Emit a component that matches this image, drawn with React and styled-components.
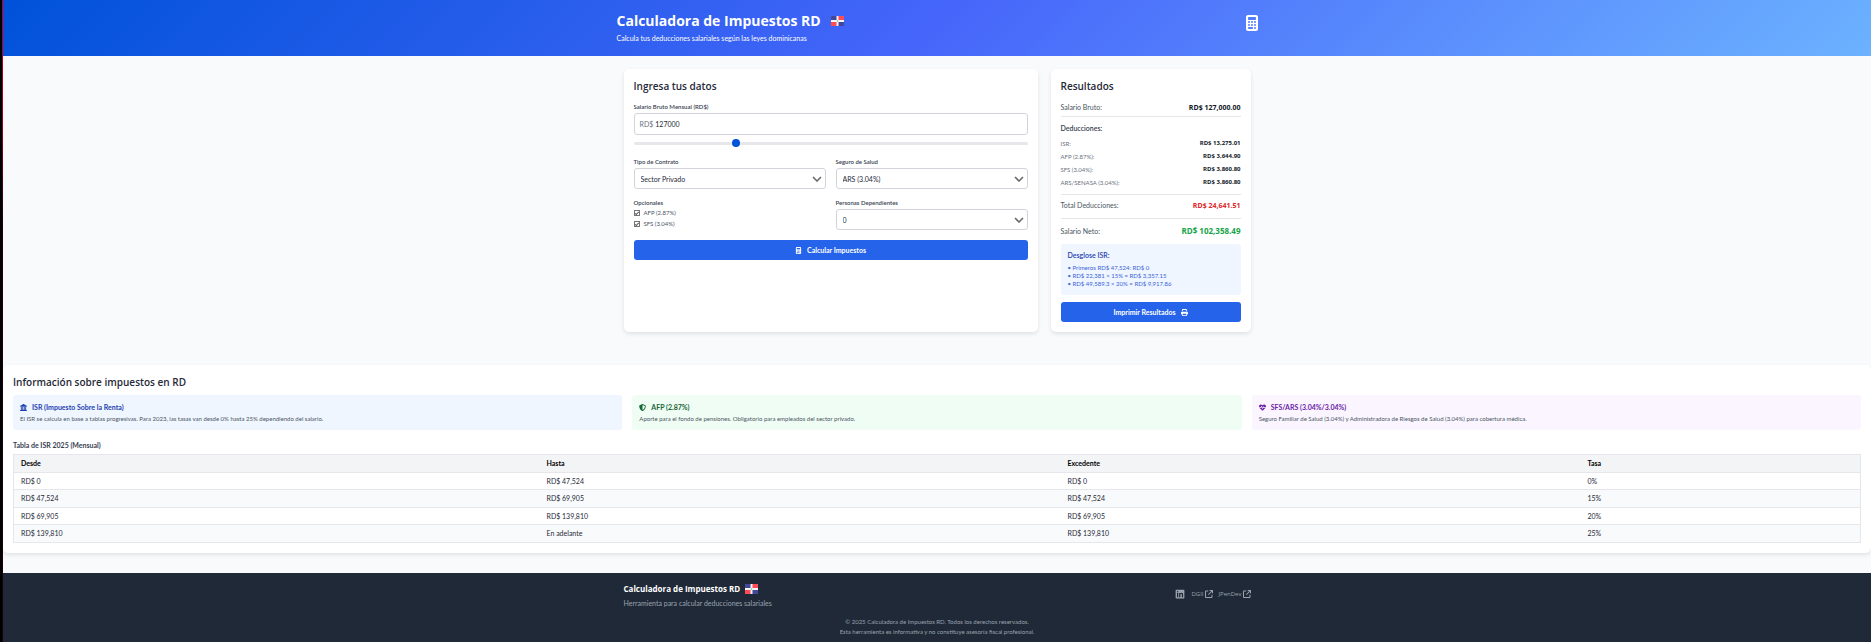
import React, { useState } from "react";
import styled, { createGlobalStyle, css } from "styled-components";
import {
  FaCalculator,
  FaLandmark,
  FaShieldHalved,
  FaHeartPulse,
  FaPrint,
  FaLinkedin,
  FaArrowUpRightFromSquare,
} from "react-icons/fa6";

const GlobalStyle = createGlobalStyle`
  *, *::before, *::after { box-sizing: border-box; }
  body { margin: 0; background: #f9fafb; color: #1f2937; font-family: Lato, "Open Sans", sans-serif; }
  h1, h2, h3, h4, p, ul { margin: 0; padding: 0; }
  button, input, select { font-family: inherit; }
`;

const display = css`
  font-family: "Open Sans", "Noto Sans", sans-serif;
`;

const Page = styled.div`
  display: grid;
  grid-template-columns: 3px minmax(0, 1fr);
  min-height: 100vh;
`;

const Edge = styled.div`
  background: linear-gradient(#c00024, #a0001c 18%, #1c0010 35%) right / 1px 100% no-repeat #000;
`;

const Content = styled.div`
  display: flex;
  flex-direction: column;
`;

const Header = styled.header`
  background: linear-gradient(135deg, #0052d9 0%, #4666fa 50%, #6cb2ff 100%);
  color: #fff;
  padding: 12px 0 14px;
`;

const HeaderInner = styled.div`
  display: flex;
  justify-content: space-between;
  align-items: flex-start;
  max-width: 641px;
  margin: 0 auto;
`;

const SiteTitle = styled.h1`
  ${display}
  display: flex;
  align-items: center;
  gap: 10px;
  font-size: 14px;
  line-height: 18px;
  font-weight: 700;
`;

const Tagline = styled.p`
  margin-top: 4px;
  font-size: 7px;
  line-height: 8px;
`;

const HeaderIcon = styled.span`
  display: flex;
  align-items: center;
  height: 22px;
  font-size: 16px;
  svg { width: 12px; height: 16px; }
`;

const Main = styled.main`
  width: 627px;
  max-width: 100%;
  margin: 13px auto 0;
  display: grid;
  grid-template-columns: minmax(0, 1fr) 200px;
  gap: 13px;
`;

const Card = styled.section`
  background: #fff;
  border-radius: 5px;
  padding: 10px;
  box-shadow: 0 2px 4px rgba(0, 0, 0, 0.1);
`;

const Heading = styled.h2`
  ${display}
  font-size: 10px;
  line-height: 14px;
  font-weight: 600;
`;

const Form = styled.form`
  display: flex;
  flex-direction: column;
  margin-top: 10px;
  gap: 10px;
`;

const Field = styled.div`
  display: flex;
  flex-direction: column;
`;

const labelText = css`
  margin-bottom: 2px;
  font-size: 6px;
  line-height: 8px;
  font-weight: 600;
  color: #374151;
`;
const Label = styled.label`${labelText}`;

const InputBox = styled.div`
  display: flex;
  align-items: center;
  gap: 2px;
  height: 22px;
  padding: 0 5px;
  border: 1px solid #d1d5db;
  border-radius: 3px;
  font-size: 7px;
  color: #6b7280;
`;

const MoneyInput = styled.input`
  flex: 1;
  min-width: 0;
  border: 0;
  padding: 0;
  outline: 0;
  font-size: 7px;
  color: #1f2937;
  background: none;
`;

const Slider = styled.input`
  appearance: none;
  width: 100%;
  height: 8px;
  margin: 4px 0 1px;
  background: transparent;
  &::-webkit-slider-runnable-track {
    height: 3px;
    border-radius: 2px;
    background: #e5e7eb;
  }
  &::-webkit-slider-thumb {
    appearance: none;
    width: 8px;
    height: 8px;
    margin-top: -3px;
    border-radius: 50%;
    background: #0052d9;
  }
`;

const Pair = styled.div`
  display: grid;
  grid-template-columns: 1fr 1fr;
  gap: 10px;
`;

const SelectBox = styled.div`
  display: grid;
  align-items: center;
  > * { grid-area: 1 / 1; }
  svg { justify-self: end; margin-right: 4px; pointer-events: none; }
`;

const Select = styled.select`
  appearance: none;
  width: 100%;
  height: 21px;
  padding: 0 16px 0 6px;
  border: 1px solid #d1d5db;
  border-radius: 3px;
  background: #fff;
  color: #1f2937;
  font-size: 7px;
`;

const Options = styled.fieldset`
  display: flex;
  flex-direction: column;
  margin: 0;
  padding: 0;
  border: 0;
`;
const Legend = styled.legend`
  ${labelText}
  margin-bottom: 0;
  padding: 0;
`;

const CheckLabel = styled.label`
  display: flex;
  align-items: center;
  gap: 4px;
  height: 11px;
  font-size: 6px;
  color: #4b5563;
`;

const Checkbox = styled.input`
  appearance: none;
  display: grid;
  place-items: center;
  width: 6px;
  height: 6px;
  margin: 0;
  border: 1px solid #767676;
  background: #fff;
  &:checked::after {
    content: "";
    width: 2px;
    height: 4px;
    border: solid #4b5563;
    border-width: 0 1px 1px 0;
    transform: rotate(45deg);
  }
`;

const PrimaryButton = styled.button`
  display: flex;
  align-items: center;
  justify-content: center;
  gap: 5px;
  width: 100%;
  height: 20px;
  padding: 0;
  border: 0;
  border-radius: 3px;
  background: #2563eb;
  color: #fff;
  font-size: 7px;
  font-weight: 700;
`;

const Results = styled.div`
  display: flex;
  flex-direction: column;
  margin-top: 10px;
`;

const Row = styled.div`
  display: flex;
  justify-content: space-between;
  align-items: center;
  font-size: 7px;
  line-height: 9px;
  color: #4b5563;
`;
const GrossRow = styled(Row)`
  padding-bottom: 4px;
  border-bottom: 1px solid #e5e7eb;
`;
const TotalRow = styled(Row)`
  margin-top: 7px;
  padding: 6px 0 8px;
  border: solid #e5e7eb;
  border-width: 1px 0;
`;
const NetRow = styled(Row)`
  margin-top: 6px;
  line-height: 12px;
`;
const DetailRow = styled(Row)`
  font-size: 6px;
  color: #6b7280;
`;

const amountSizes = { small: "6px", medium: "7px", large: "8px" };
const Amount = styled.span`
  ${display}
  font-weight: 700;
  font-size: ${(p) => amountSizes[p.$size]};
  color: ${(p) => p.$color || "#111827"};
`;

const SubTitle = styled.h3`
  margin: 7px 0 6px;
  font-size: 7px;
  line-height: 9px;
  font-weight: 600;
  color: #374151;
`;

const Details = styled.div`
  display: flex;
  flex-direction: column;
  gap: 4px;
`;

const Breakdown = styled.div`
  margin: 7px 0;
  padding: 7px;
  border-radius: 3px;
  background: #eff6ff;
`;
const BreakdownTitle = styled.h3`
  margin-bottom: 4px;
  font-size: 7px;
  line-height: 9px;
  font-weight: 600;
  color: #1e40af;
`;
const BreakdownList = styled.ul`
  list-style: none;
  font-size: 6px;
  line-height: 8px;
  color: #3b63d8;
`;

const Info = styled(Card)`
  margin-top: 33px;
`;

const InfoGrid = styled.div`
  display: grid;
  grid-template-columns: repeat(3, 1fr);
  gap: 10px;
  margin-top: 6px;
`;

const InfoCard = styled.article`
  padding: 7px;
  border-radius: 3px;
  background: ${(p) => p.$bg};
`;
const InfoTitle = styled.h3`
  display: flex;
  align-items: center;
  gap: 5px;
  margin-bottom: 3px;
  font-size: 7px;
  line-height: 10px;
  font-weight: 700;
  color: ${(p) => p.$color};
`;
const InfoText = styled.p`
  font-size: 6px;
  line-height: 8px;
  color: #4b5563;
`;

const TableTitle = styled.h3`
  margin: 10px 0 4px;
  font-size: 7px;
  line-height: 10px;
  font-weight: 700;
  color: #374151;
`;

const Table = styled.table`
  width: 100%;
  border-collapse: collapse;
  border: 1px solid #e5e7eb;
  font-size: 7px;
  line-height: 9px;
  th, td { padding: 4px 7px; text-align: left; border-bottom: 1px solid #e5e7eb; }
  th { background: #f3f4f6; color: #000; font-weight: 700; }
  tbody tr:nth-child(odd) { background: #fff; }
  tbody tr:nth-child(odd) td { padding-bottom: 3px; }
  tbody tr:nth-child(even) { background: #f9fafb; }
`;
const Col = styled.col`
  width: ${(p) => p.$w};
`;

const Footer = styled.footer`
  flex: 1;
  margin-top: 20px;
  padding: 10px 0 5px;
  background: #1f2937;
  color: #9ca3af;
`;
const FooterInner = styled.div`
  display: flex;
  justify-content: space-between;
  width: 627px;
  max-width: 100%;
  margin: 0 auto;
`;
const FooterTitle = styled.h3`
  ${display}
  display: flex;
  align-items: center;
  gap: 5px;
  font-size: 8px;
  line-height: 12px;
  font-weight: 700;
  color: #fff;
`;
const FooterText = styled.p`
  margin-top: 4px;
  font-size: 7px;
  line-height: 8px;
`;
const Links = styled.nav`
  display: flex;
  align-items: center;
  gap: 6px;
  height: 21px;
`;
const FooterLink = styled.a`
  ${display}
  display: flex;
  align-items: center;
  gap: 1px;
  font-size: 6px;
  color: inherit;
  text-decoration: none;
  svg { flex: none; font-size: ${(p) => (p.$iconOnly ? "10px" : "8px")}; }
`;
const Legal = styled.div`
  margin-top: 10px;
  text-align: center;
  font-size: 6px;
  line-height: 10px;
`;

const Flag = () => (
  <svg width="13" height="10" viewBox="0 0 26 20" role="img" aria-label="República Dominicana">
    <rect width="26" height="20" rx="1" fill="#f5f5f5" />
    <path d="M0 1a1 1 0 0 1 1-1h10v8H0zM15 12h11v7a1 1 0 0 1-1 1H15z" fill="#41479b" />
    <path d="M15 0h10a1 1 0 0 1 1 1v7H15zM0 12h11v8H1a1 1 0 0 1-1-1z" fill="#ff4b55" />
    <circle cx="13" cy="10" r="1.5" fill="#73af8a" />
  </svg>
);

const Chevron = () => (
  <svg width="10" height="6" viewBox="0 0 10 6" fill="none" stroke="#6b6b6b" strokeWidth="1.6" aria-hidden="true">
    <path d="M1 1l4 4 4-4" />
  </svg>
);

function SelectField({ id, label, options }) {
  return (
    <Field>
      <Label htmlFor={id}>{label}</Label>
      <SelectBox>
        <Select id={id}>
          {options.map((o) => (
            <option key={o}>{o}</option>
          ))}
        </Select>
        <Chevron />
      </SelectBox>
    </Field>
  );
}

const deductions = [
  ["ISR:", "RD$ 13,275.01"],
  ["AFP (2.87%):", "RD$ 3,644.90"],
  ["SFS (3.04%):", "RD$ 3,860.80"],
  ["ARS/SENASA (3.04%):", "RD$ 3,860.80"],
];

const infoCards = [
  {
    title: "ISR (Impuesto Sobre la Renta)",
    text: "El ISR se calcula en base a tablas progresivas. Para 2023, las tasas van desde 0% hasta 25% dependiendo del salario.",
    Icon: FaLandmark,
    bg: "#eff6ff",
    color: "#1e40af",
  },
  {
    title: "AFP (2.87%)",
    text: "Aporte para el fondo de pensiones. Obligatorio para empleados del sector privado.",
    Icon: FaShieldHalved,
    bg: "#f0fdf4",
    color: "#166534",
  },
  {
    title: "SFS/ARS (3.04%/3.04%)",
    text: "Seguro Familiar de Salud (3.04%) y Administradora de Riesgos de Salud (3.04%) para cobertura médica.",
    Icon: FaHeartPulse,
    bg: "#faf5ff",
    color: "#6b21a8",
  },
];

const brackets = [
  ["RD$ 0", "RD$ 47,524", "RD$ 0", "0%"],
  ["RD$ 47,524", "RD$ 69,905", "RD$ 47,524", "15%"],
  ["RD$ 69,905", "RD$ 139,810", "RD$ 69,905", "20%"],
  ["RD$ 139,810", "En adelante", "RD$ 139,810", "25%"],
];

export default function App() {
  const [salary, setSalary] = useState("127000");
  return (
    <Page>
      <GlobalStyle />
      <Edge />
      <Content>
        <Header>
          <HeaderInner>
            <div>
              <SiteTitle>Calculadora de Impuestos RD <Flag /></SiteTitle>
              <Tagline>Calcula tus deducciones salariales según las leyes dominicanas</Tagline>
            </div>
            <HeaderIcon><FaCalculator /></HeaderIcon>
          </HeaderInner>
        </Header>

        <Main>
          <Card>
            <Heading>Ingresa tus datos</Heading>
            <Form onSubmit={(e) => e.preventDefault()}>
              <Field>
                <Label htmlFor="salary">Salario Bruto Mensual (RD$)</Label>
                <InputBox>
                  <span>RD$</span>
                  <MoneyInput id="salary" value={salary} onChange={(e) => setSalary(e.target.value)} />
                </InputBox>
                <Slider
                  type="range"
                  aria-label="Salario Bruto Mensual"
                  min="0"
                  max="500000"
                  step="1000"
                  value={salary}
                  onChange={(e) => setSalary(e.target.value)}
                />
              </Field>
              <Pair>
                <SelectField id="contract" label="Tipo de Contrato" options={["Sector Privado", "Sector Público"]} />
                <SelectField id="health" label="Seguro de Salud" options={["ARS (3.04%)", "SENASA (3.04%)"]} />
              </Pair>
              <Pair>
                <Options>
                  <Legend>Opcionales</Legend>
                  <CheckLabel><Checkbox type="checkbox" defaultChecked />AFP (2.87%)</CheckLabel>
                  <CheckLabel><Checkbox type="checkbox" defaultChecked />SFS (3.04%)</CheckLabel>
                </Options>
                <SelectField id="dependents" label="Personas Dependientes" options={["0", "1", "2", "3"]} />
              </Pair>
              <PrimaryButton type="submit"><FaCalculator />Calcular Impuestos</PrimaryButton>
            </Form>
          </Card>

          <Card>
            <Heading>Resultados</Heading>
            <Results>
              <GrossRow><span>Salario Bruto:</span><Amount $size="medium">RD$ 127,000.00</Amount></GrossRow>
              <SubTitle>Deducciones:</SubTitle>
              <Details>
                {deductions.map(([name, value]) => (
                  <DetailRow key={name}><span>{name}</span><Amount $size="small">{value}</Amount></DetailRow>
                ))}
              </Details>
              <TotalRow><span>Total Deducciones:</span><Amount $size="medium" $color="#dc2626">RD$ 24,641.51</Amount></TotalRow>
              <NetRow><span>Salario Neto:</span><Amount $size="large" $color="#16a34a">RD$ 102,358.49</Amount></NetRow>
              <Breakdown>
                <BreakdownTitle>Desglose ISR:</BreakdownTitle>
                <BreakdownList>
                  <li>• Primeros RD$ 47,524: RD$ 0</li>
                  <li>• RD$ 22,381 × 15% = RD$ 3,357.15</li>
                  <li>• RD$ 49,589.3 × 20% = RD$ 9,917.86</li>
                </BreakdownList>
              </Breakdown>
              <PrimaryButton type="button">Imprimir Resultados<FaPrint /></PrimaryButton>
            </Results>
          </Card>
        </Main>

        <Info>
          <Heading>Información sobre impuestos en RD</Heading>
          <InfoGrid>
            {infoCards.map(({ title, text, Icon, bg, color }) => (
              <InfoCard key={title} $bg={bg}>
                <InfoTitle $color={color}><Icon />{title}</InfoTitle>
                <InfoText>{text}</InfoText>
              </InfoCard>
            ))}
          </InfoGrid>
          <TableTitle>Tabla de ISR 2025 (Mensual)</TableTitle>
          <Table>
            <colgroup>
              <Col $w="526px" />
              <Col $w="521px" />
              <Col $w="520px" />
              <Col $w="auto" />
            </colgroup>
            <thead>
              <tr><th>Desde</th><th>Hasta</th><th>Excedente</th><th>Tasa</th></tr>
            </thead>
            <tbody>
              {brackets.map((row) => (
                <tr key={row[0]}>{row.map((cell, i) => <td key={i}>{cell}</td>)}</tr>
              ))}
            </tbody>
          </Table>
        </Info>

        <Footer>
          <FooterInner>
            <div>
              <FooterTitle>Calculadora de Impuestos RD <Flag /></FooterTitle>
              <FooterText>Herramienta para calcular deducciones salariales</FooterText>
            </div>
            <Links>
              <FooterLink $iconOnly href="#linkedin" aria-label="LinkedIn"><FaLinkedin /></FooterLink>
              <FooterLink href="#dgii">DGII <FaArrowUpRightFromSquare /></FooterLink>
              <FooterLink href="#jpendev">JPenDev <FaArrowUpRightFromSquare /></FooterLink>
            </Links>
          </FooterInner>
          <Legal>
            <p>© 2025 Calculadora de Impuestos RD. Todos los derechos reservados.</p>
            <p>Esta herramienta es informativa y no constituye asesoría fiscal profesional.</p>
          </Legal>
        </Footer>
      </Content>
    </Page>
  );
}
